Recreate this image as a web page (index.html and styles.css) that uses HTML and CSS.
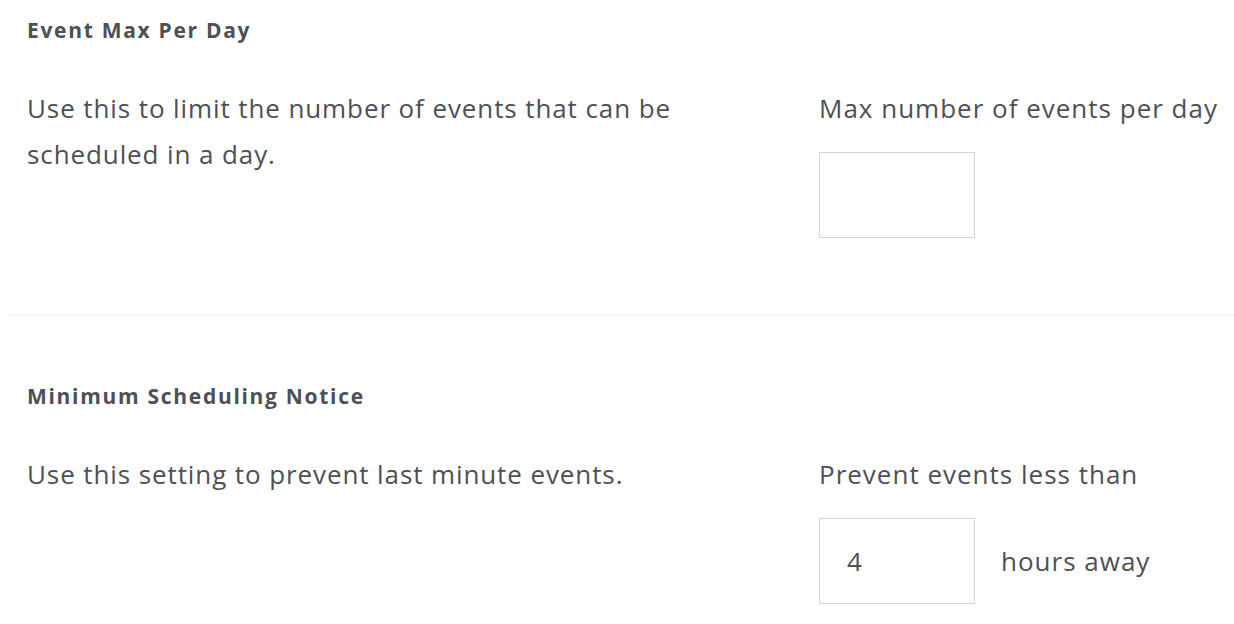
FILE: index.html
```html
<!DOCTYPE html>
<html>
<head>
<meta charset="utf-8">
<link rel="stylesheet" href="styles.css">
</head>
<body>
<section class="setting">
  <h3 class="setting-title">Event Max Per Day</h3>
  <div class="setting-row">
    <p class="setting-desc">Use this to limit the number of events that can be scheduled in a day.</p>
    <div class="setting-control">
      <label class="control-label">Max number of events per day</label>
      <div class="control-line">
        <div class="box"></div>
      </div>
    </div>
  </div>
</section>
<hr class="divider">
<section class="setting second">
  <h3 class="setting-title">Minimum Scheduling Notice</h3>
  <div class="setting-row">
    <p class="setting-desc">Use this setting to prevent last minute events.</p>
    <div class="setting-control">
      <label class="control-label">Prevent events less than</label>
      <div class="control-line">
        <div class="box">4</div>
        <span class="suffix">hours away</span>
      </div>
    </div>
  </div>
</section>
</body>
</html>
```
FILE: styles.css
```css
html, body {
  margin: 0;
  padding: 0;
  background: #ffffff;
}
body {
  font-family: "Open Sans", "Liberation Sans", sans-serif;
  color: #4d5055;
  width: 1234px;
  height: 624px;
  overflow: hidden;
}
.setting {
  padding: 0 0 0 27px;
}
.setting-title {
  margin: 0;
  font-size: 21px;
  font-weight: 700;
  letter-spacing: 1.7px;
  line-height: 24px;
  padding-top: 18px;
}
.setting-row {
  display: grid;
  grid-template-columns: 792px 1fr;
  margin-top: 43px;
}
.setting-desc {
  margin: 0;
  font-size: 26px;
  letter-spacing: 0.9px;
  line-height: 46px;
  width: 690px;
}
.control-label {
  display: block;
  font-size: 26px;
  letter-spacing: 1px;
  line-height: 46px;
}
.control-line {
  display: flex;
  align-items: center;
  gap: 26px;
  margin-top: 21px;
}
.box {
  width: 154px;
  height: 84px;
  border: 1px solid #d4d4d4;
  box-sizing: content-box;
  font-size: 26px;
  line-height: 84px;
  text-indent: 27px;
}
.suffix {
  font-size: 26px;
  letter-spacing: 1px;
}
.divider {
  border: 0;
  height: 2px;
  background: #f6f6f6;
  margin: 76px 0 0 8px;
}
.second .setting-title {
  padding-top: 68px;
}
```
